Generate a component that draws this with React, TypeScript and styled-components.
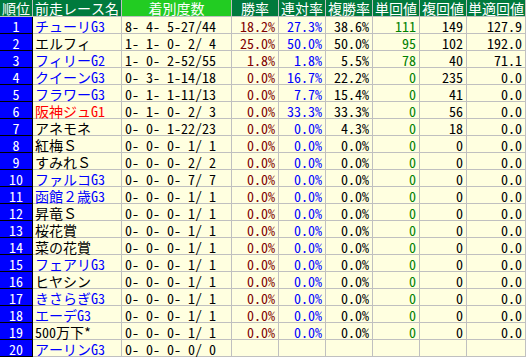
import React from "react";
import styled, { createGlobalStyle } from "styled-components";

const GlobalStyle = createGlobalStyle`
  html, body { margin: 0; padding: 0; background: #ffffe0; }
  body { font-family: "Noto Sans Mono CJK JP", "Noto Sans CJK JP", monospace; }
`;

const FONT = `"Noto Sans Mono CJK JP", "Noto Sans CJK JP", "DejaVu Sans Mono", monospace`;

const Table = styled.div`
  display: grid;
  grid-template-columns: 33px 89px 110px 47px 47px 47px 47px 47px 59px;
  grid-auto-rows: 17px;
  width: 526px;
  font-family: ${FONT};
  font-size: 14px;
  line-height: 16px;
`;

const Cell = styled.div`
  box-sizing: border-box;
  border-right: 1px solid #c0c0c0;
  border-bottom: 1px solid #c0c0c0;
  background: #ffffe0;
  white-space: pre;
  height: 17px;
  padding-top: 1px;
`;

const HeaderCell = styled(Cell)<{ $bright?: boolean }>`
  background: ${(p) => (p.$bright ? "#22cc22" : "#007a3d")};
  color: #ffffff;
  text-align: center;
  padding-top: 0;
`;

const RankCell = styled(Cell)`
  background: #0000ff;
  color: #ffffff;
  text-align: center;
  border-right-color: #000000;
  border-bottom-color: #000000;
`;

const NameCell = styled(Cell)<{ $tone: "plain" | "graded" | "g1" }>`
  padding-left: 2px;
  color: ${(p) => (p.$tone === "g1" ? "#ff0000" : p.$tone === "graded" ? "#0000ff" : "#000000")};
`;

const RecordCell = styled(Cell)`
  padding-left: 3px;
  color: #000000;
`;

const NumCell = styled(Cell)<{ $color?: string }>`
  text-align: right;
  padding-right: 3px;
  color: ${(p) => p.$color || "#000000"};
`;

type Row = {
  name: string;
  tone: "plain" | "graded" | "g1";
  rec: string;
  v?: [string, string, string, string, string, string];
};

const zero: [string, string, string, string, string, string] = ["0.0%", "0.0%", "0.0%", "0", "0", "0.0"];

const rows: Row[] = [
  { name: "チューリG3", tone: "graded", rec: "8- 4- 5-27/44", v: ["18.2%", "27.3%", "38.6%", "111", "149", "127.9"] },
  { name: "エルフィ", tone: "plain", rec: "1- 1- 0- 2/ 4", v: ["25.0%", "50.0%", "50.0%", "95", "102", "192.0"] },
  { name: "フィリーG2", tone: "graded", rec: "1- 0- 2-52/55", v: ["1.8%", "1.8%", "5.5%", "78", "40", "71.1"] },
  { name: "クイーンG3", tone: "graded", rec: "0- 3- 1-14/18", v: ["0.0%", "16.7%", "22.2%", "0", "235", "0.0"] },
  { name: "フラワーG3", tone: "graded", rec: "0- 1- 1-11/13", v: ["0.0%", "7.7%", "15.4%", "0", "41", "0.0"] },
  { name: "阪神ジュG1", tone: "g1", rec: "0- 1- 0- 2/ 3", v: ["0.0%", "33.3%", "33.3%", "0", "56", "0.0"] },
  { name: "アネモネ", tone: "plain", rec: "0- 0- 1-22/23", v: ["0.0%", "0.0%", "4.3%", "0", "18", "0.0"] },
  { name: "紅梅Ｓ", tone: "plain", rec: "0- 0- 0- 1/ 1", v: zero },
  { name: "すみれＳ", tone: "plain", rec: "0- 0- 0- 2/ 2", v: zero },
  { name: "ファルコG3", tone: "graded", rec: "0- 0- 0- 7/ 7", v: zero },
  { name: "函館２歳G3", tone: "graded", rec: "0- 0- 0- 1/ 1", v: zero },
  { name: "昇竜Ｓ", tone: "plain", rec: "0- 0- 0- 1/ 1", v: zero },
  { name: "桜花賞", tone: "plain", rec: "0- 0- 0- 1/ 1", v: zero },
  { name: "菜の花賞", tone: "plain", rec: "0- 0- 0- 1/ 1", v: zero },
  { name: "フェアリG3", tone: "graded", rec: "0- 0- 0- 1/ 1", v: zero },
  { name: "ヒヤシン", tone: "plain", rec: "0- 0- 0- 1/ 1", v: zero },
  { name: "きさらぎG3", tone: "graded", rec: "0- 0- 0- 1/ 1", v: zero },
  { name: "エーデG3", tone: "graded", rec: "0- 0- 0- 1/ 1", v: zero },
  { name: "500万下*", tone: "plain", rec: "0- 0- 0- 1/ 1", v: zero },
  { name: "アーリンG3", tone: "graded", rec: "0- 0- 0- 0/ 0" },
];

const colColors = ["#800000", "#0000ff", "#000000", "#008000", "#000000", "#000000"];

const headers = ["順位", "前走レース名", "着別度数", "勝率", "連対率", "複勝率", "単回値", "複回値", "単適回値"];

export default function App() {
  return (
    <>
      <GlobalStyle />
      <Table>
        {headers.map((h) => (
          <HeaderCell key={h} $bright={h === "着別度数"}>
            {h}
          </HeaderCell>
        ))}
        {rows.map((r, i) => (
          <React.Fragment key={i}>
            <RankCell>{i + 1}</RankCell>
            <NameCell $tone={r.tone}>{r.name}</NameCell>
            <RecordCell>{r.rec}</RecordCell>
            {colColors.map((c, j) => (
              <NumCell key={j} $color={c}>
                {r.v ? r.v[j] : ""}
              </NumCell>
            ))}
          </React.Fragment>
        ))}
      </Table>
    </>
  );
}
